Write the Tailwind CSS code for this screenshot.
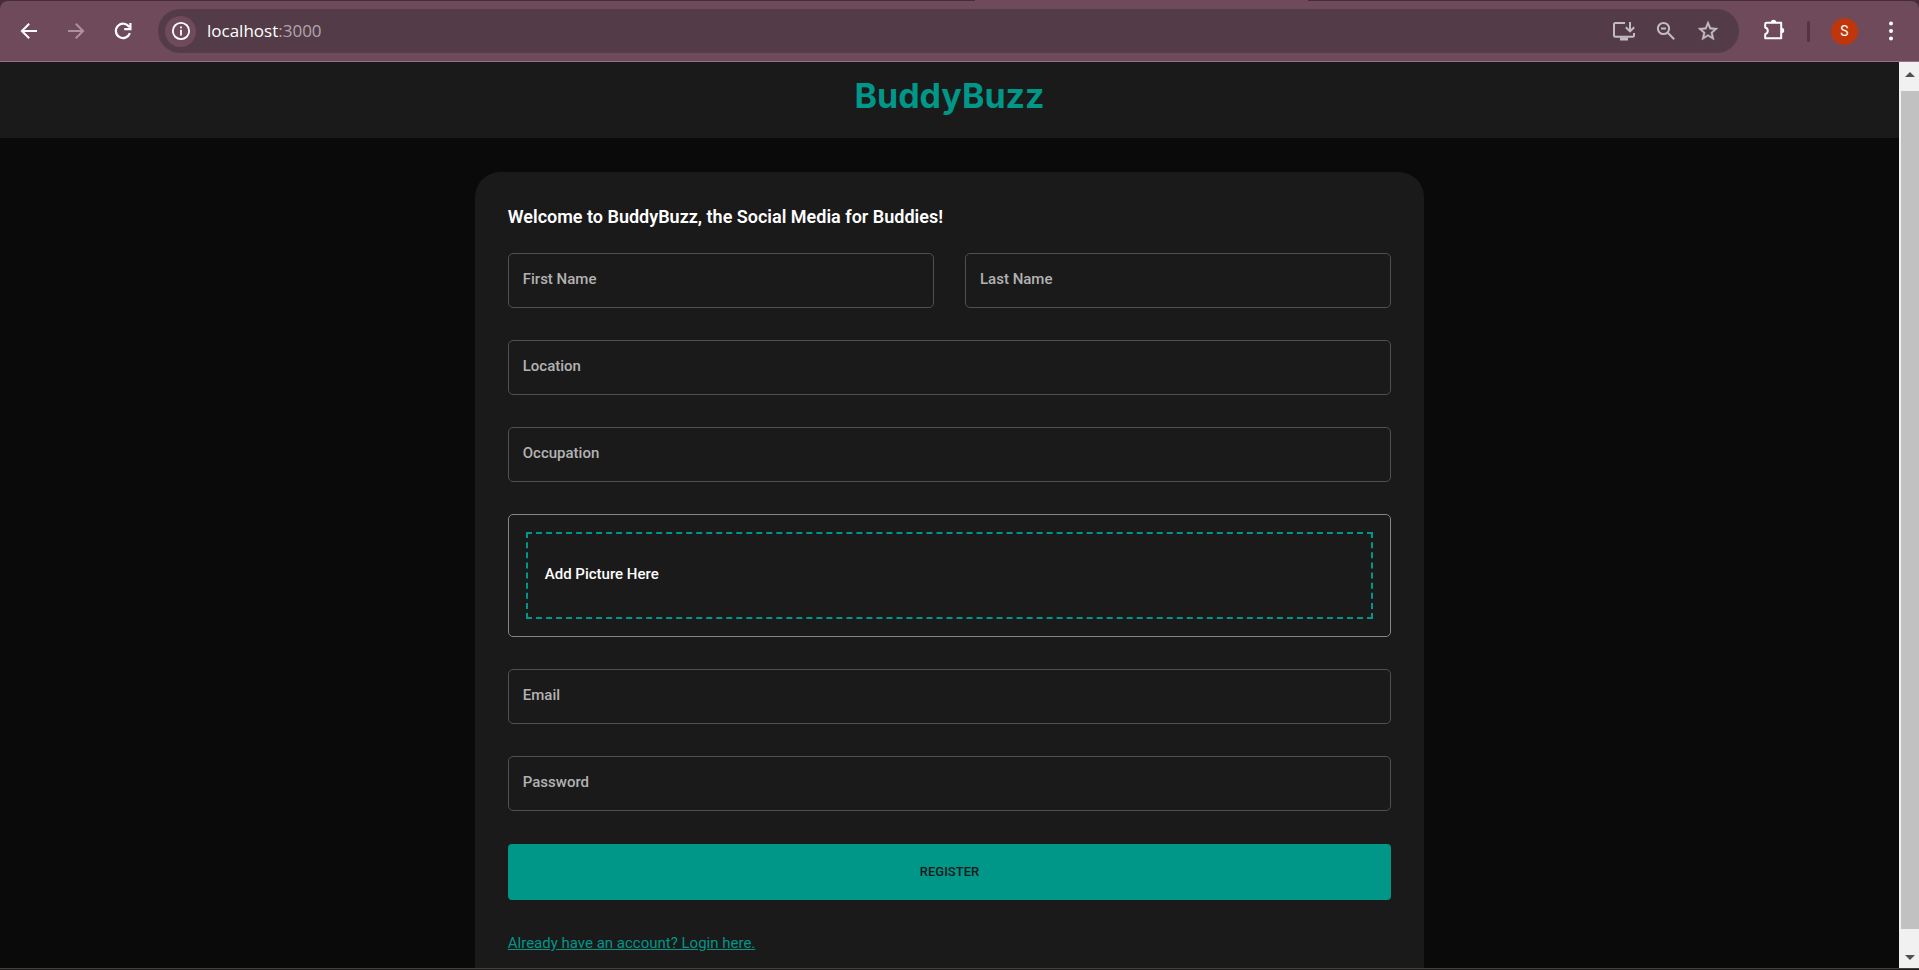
<!DOCTYPE html>
<html lang="en">
<head>
<meta charset="utf-8">
<title>BuddyBuzz</title>
<script src="https://cdn.jsdelivr.net/npm/@tailwindcss/browser@4"></script>
</head>
<body class="flex h-screen flex-col overflow-hidden bg-[#0a0a0a] font-['Roboto',sans-serif]">

<!-- Browser toolbar -->
<header class="relative shrink-0 border-b border-[#8f7680] bg-[#452c37] pt-px">
  <div class="absolute left-[975px] top-0 h-px w-[333px] bg-[#6f4a5a]"></div>
  <div class="flex h-[60px] items-center rounded-t-lg bg-[#6f4a5a] pl-[13px] pr-5 text-white">
    <nav class="flex gap-[15px]">
      <button aria-label="Back" class="flex size-8 items-center justify-center"><svg class="size-6" viewBox="0 0 24 24" fill="none" stroke="currentColor" stroke-width="2"><path d="M20 12H5.4M12.2 4.7 4.9 12l7.3 7.3"/></svg></button>
      <button aria-label="Forward" class="flex size-8 items-center justify-center text-[#ac929c]"><svg class="size-6" viewBox="0 0 24 24" fill="none" stroke="currentColor" stroke-width="2"><path d="M4 12h14.6M11.8 4.700l7.300 7.300-7.300 7.300"/></svg></button>
      <button aria-label="Reload" class="flex size-8 items-center justify-center"><svg class="size-6" viewBox="0 0 24 24" fill="none" stroke="currentColor" stroke-width="2.200"><path d="M18.900 14.200A7.200 7.200 0 1 1 18.300 8.200"/><path d="M19.400 4v6.100h-6.200"/></svg></button>
    </nav>
    <div class="ml-[19px] flex h-11 flex-1 items-center rounded-full bg-[#533c47] pl-[7px] pr-[15px]">
      <button aria-label="View site information" class="flex size-[31px] items-center justify-center rounded-full bg-[#6f4a5a]"><svg class="size-[22px]" viewBox="0 0 24 24" fill="currentColor"><path d="M11 10.500h2V17h-2zM11 7h2v2h-2z"/><circle cx="12" cy="12" r="8.900" fill="none" stroke="currentColor" stroke-width="2"/></svg></button>
      <div class="ml-[11px] flex-1 font-['Open_Sans',sans-serif] text-[17px] leading-6">localhost<span class="text-[#b3a4aa]">:3000</span></div>
      <div class="flex gap-[10px] text-[#c3bcbf]">
        <button aria-label="Install app" class="flex size-8 items-center justify-center"><svg class="size-6" viewBox="0 0 24 24" fill="none" stroke="currentColor" stroke-width="2"><path d="M13 4H3.500Q2 4 2 5.500v10.700q0 1.500 1.500 1.500h17q1.500 0 1.500-1.500V14"/><path d="M18 3v9M13.800 8.200 18 12.400l4.200-4.200"/><path d="M8 20h8" stroke-width="3"/></svg></button>
        <button aria-label="Zoom" class="flex size-8 items-center justify-center"><svg class="size-6" viewBox="0 0 24 24" fill="none" stroke="currentColor" stroke-width="2"><circle cx="9.500" cy="9.500" r="5.600"/><path d="m13.800 13.800 6.400 6.400M7 9.500h5"/></svg></button>
        <button aria-label="Bookmark this tab" class="flex size-8 items-center justify-center"><svg class="size-6" viewBox="0 0 24 24" fill="currentColor" stroke="currentColor" stroke-width=".4"><path d="M22 9.240l-7.190-.620L12 2 9.190 8.630 2 9.240l5.460 4.730L5.820 21 12 17.270 18.180 21l-1.630-7.030L22 9.240zM12 15.400l-3.760 2.270 1-4.280-3.320-2.880 4.380-.380L12 6.100l1.710 4.040 4.380.380-3.320 2.880 1 4.280L12 15.400z"/></svg></button>
      </div>
    </div>
    <button aria-label="Extensions" class="ml-[19px] flex size-8 items-center justify-center pb-[2px]"><svg class="size-6" viewBox="0 0 24 24"><path d="M4.500 4.800h14.700v15.500H3.200v-4.200a3.400 3.400 0 0 0 0-6.600V6q0-1.200 1.300-1.200z" fill="none" stroke="currentColor" stroke-width="2" stroke-linejoin="round"/><path d="M8.800 4.500a2.700 2.700 0 0 1 5.400 0zM19.500 9.800a2.700 2.700 0 0 1 0 5.400z" fill="currentColor"/></svg></button>
    <div class="ml-[17px] h-[21px] w-[3px] rounded-full bg-[#533541]"></div>
    <button aria-label="Profile" class="ml-[21px] size-[27px] rounded-full bg-[#c0360c] text-sm">S</button>
    <button aria-label="Menu" class="ml-[25px] flex w-4 justify-center"><svg class="h-5 w-1" viewBox="0 0 4 20" fill="currentColor"><circle cx="2" cy="2.500" r="2"/><circle cx="2" cy="10" r="2"/><circle cx="2" cy="17.500" r="2"/></svg></button>
  </div>
</header>

<div class="flex min-h-0 flex-1 border-b border-[#444040]">
  <!-- Page -->
  <div class="min-w-0 flex-1 overflow-hidden">
    <div class="bg-[#1a1a1a] px-[6%] pb-[19px] pt-[11px] text-center">
      <h1 class="font-['Inter',sans-serif] text-[34px] font-bold leading-[46px] text-[#009688]">BuddyBuzz</h1>
    </div>
    <main class="mx-auto mt-[34px] w-1/2 rounded-[25px] bg-[#1a1a1a] px-[33px] pb-10 pt-[33px]">
      <h2 class="text-[18px] font-semibold leading-6 text-white">Welcome to BuddyBuzz, the Social Media for Buddies!</h2>
      <form class="mt-6 grid grid-cols-2 gap-x-[31px] gap-y-8 text-[15px] leading-5 text-[#b2b2b2]">
        <label class="flex h-[55px] items-center rounded-[5px] border border-[#505050] px-[14px] pb-[3px] font-medium"><span>First Name</span><input type="text" class="min-w-0 flex-1 bg-transparent pl-2 text-white outline-none"></label>
        <label class="flex h-[55px] items-center rounded-[5px] border border-[#505050] px-[14px] pb-[3px] font-medium"><span>Last Name</span><input type="text" class="min-w-0 flex-1 bg-transparent pl-2 text-white outline-none"></label>
        <label class="col-span-2 flex h-[55px] items-center rounded-[5px] border border-[#505050] px-[14px] pb-[3px] font-medium"><span>Location</span><input type="text" class="min-w-0 flex-1 bg-transparent pl-2 text-white outline-none"></label>
        <label class="col-span-2 flex h-[55px] items-center rounded-[5px] border border-[#505050] px-[14px] pb-[3px] font-medium"><span>Occupation</span><input type="text" class="min-w-0 flex-1 bg-transparent pl-2 text-white outline-none"></label>
        <div class="col-span-2 rounded-[5px] border border-[#858585] p-[17px]">
          <button type="button" class="flex h-[87px] w-full items-center border-2 border-dashed border-[#009688] px-[17px] pb-[3px] font-medium text-white">Add Picture Here</button>
        </div>
        <label class="col-span-2 flex h-[55px] items-center rounded-[5px] border border-[#505050] px-[14px] pb-[3px] font-medium"><span>Email</span><input type="email" class="min-w-0 flex-1 bg-transparent pl-2 text-white outline-none"></label>
        <label class="col-span-2 flex h-[55px] items-center rounded-[5px] border border-[#505050] px-[14px] pb-[3px] font-medium"><span>Password</span><input type="password" class="min-w-0 flex-1 bg-transparent pl-2 text-white outline-none"></label>
        <button type="submit" class="col-span-2 mt-px h-14 rounded-[4px] bg-[#009688] text-[13px] font-medium text-[#1a1a1a]">REGISTER</button>
        <a href="#login" class="col-span-2 mt-px justify-self-start text-[#009688] underline">Already have an account? Login here.</a>
      </form>
    </main>
  </div>

  <!-- Scrollbar -->
  <div aria-hidden="true" class="flex w-5 shrink-0 flex-col items-center bg-[#f1f1f1]">
    <div class="flex h-[29px] items-center pb-[5px] pl-[2px]"><svg class="h-[5px] w-[10px]" viewBox="0 0 10 5" fill="#505050"><path d="M5 0l5 5H0z"/></svg></div>
    <div class="w-[18px] flex-1 self-end bg-[#c1c1c1]"></div>
    <div class="flex h-[39px] items-end pb-2 pl-[2px]"><svg class="h-[5px] w-[10px]" viewBox="0 0 10 5" fill="#505050"><path d="M0 0h10L5 5z"/></svg></div>
  </div>
</div>
<div class="h-px shrink-0 bg-[#201a1a]"></div>
</body>
</html>
